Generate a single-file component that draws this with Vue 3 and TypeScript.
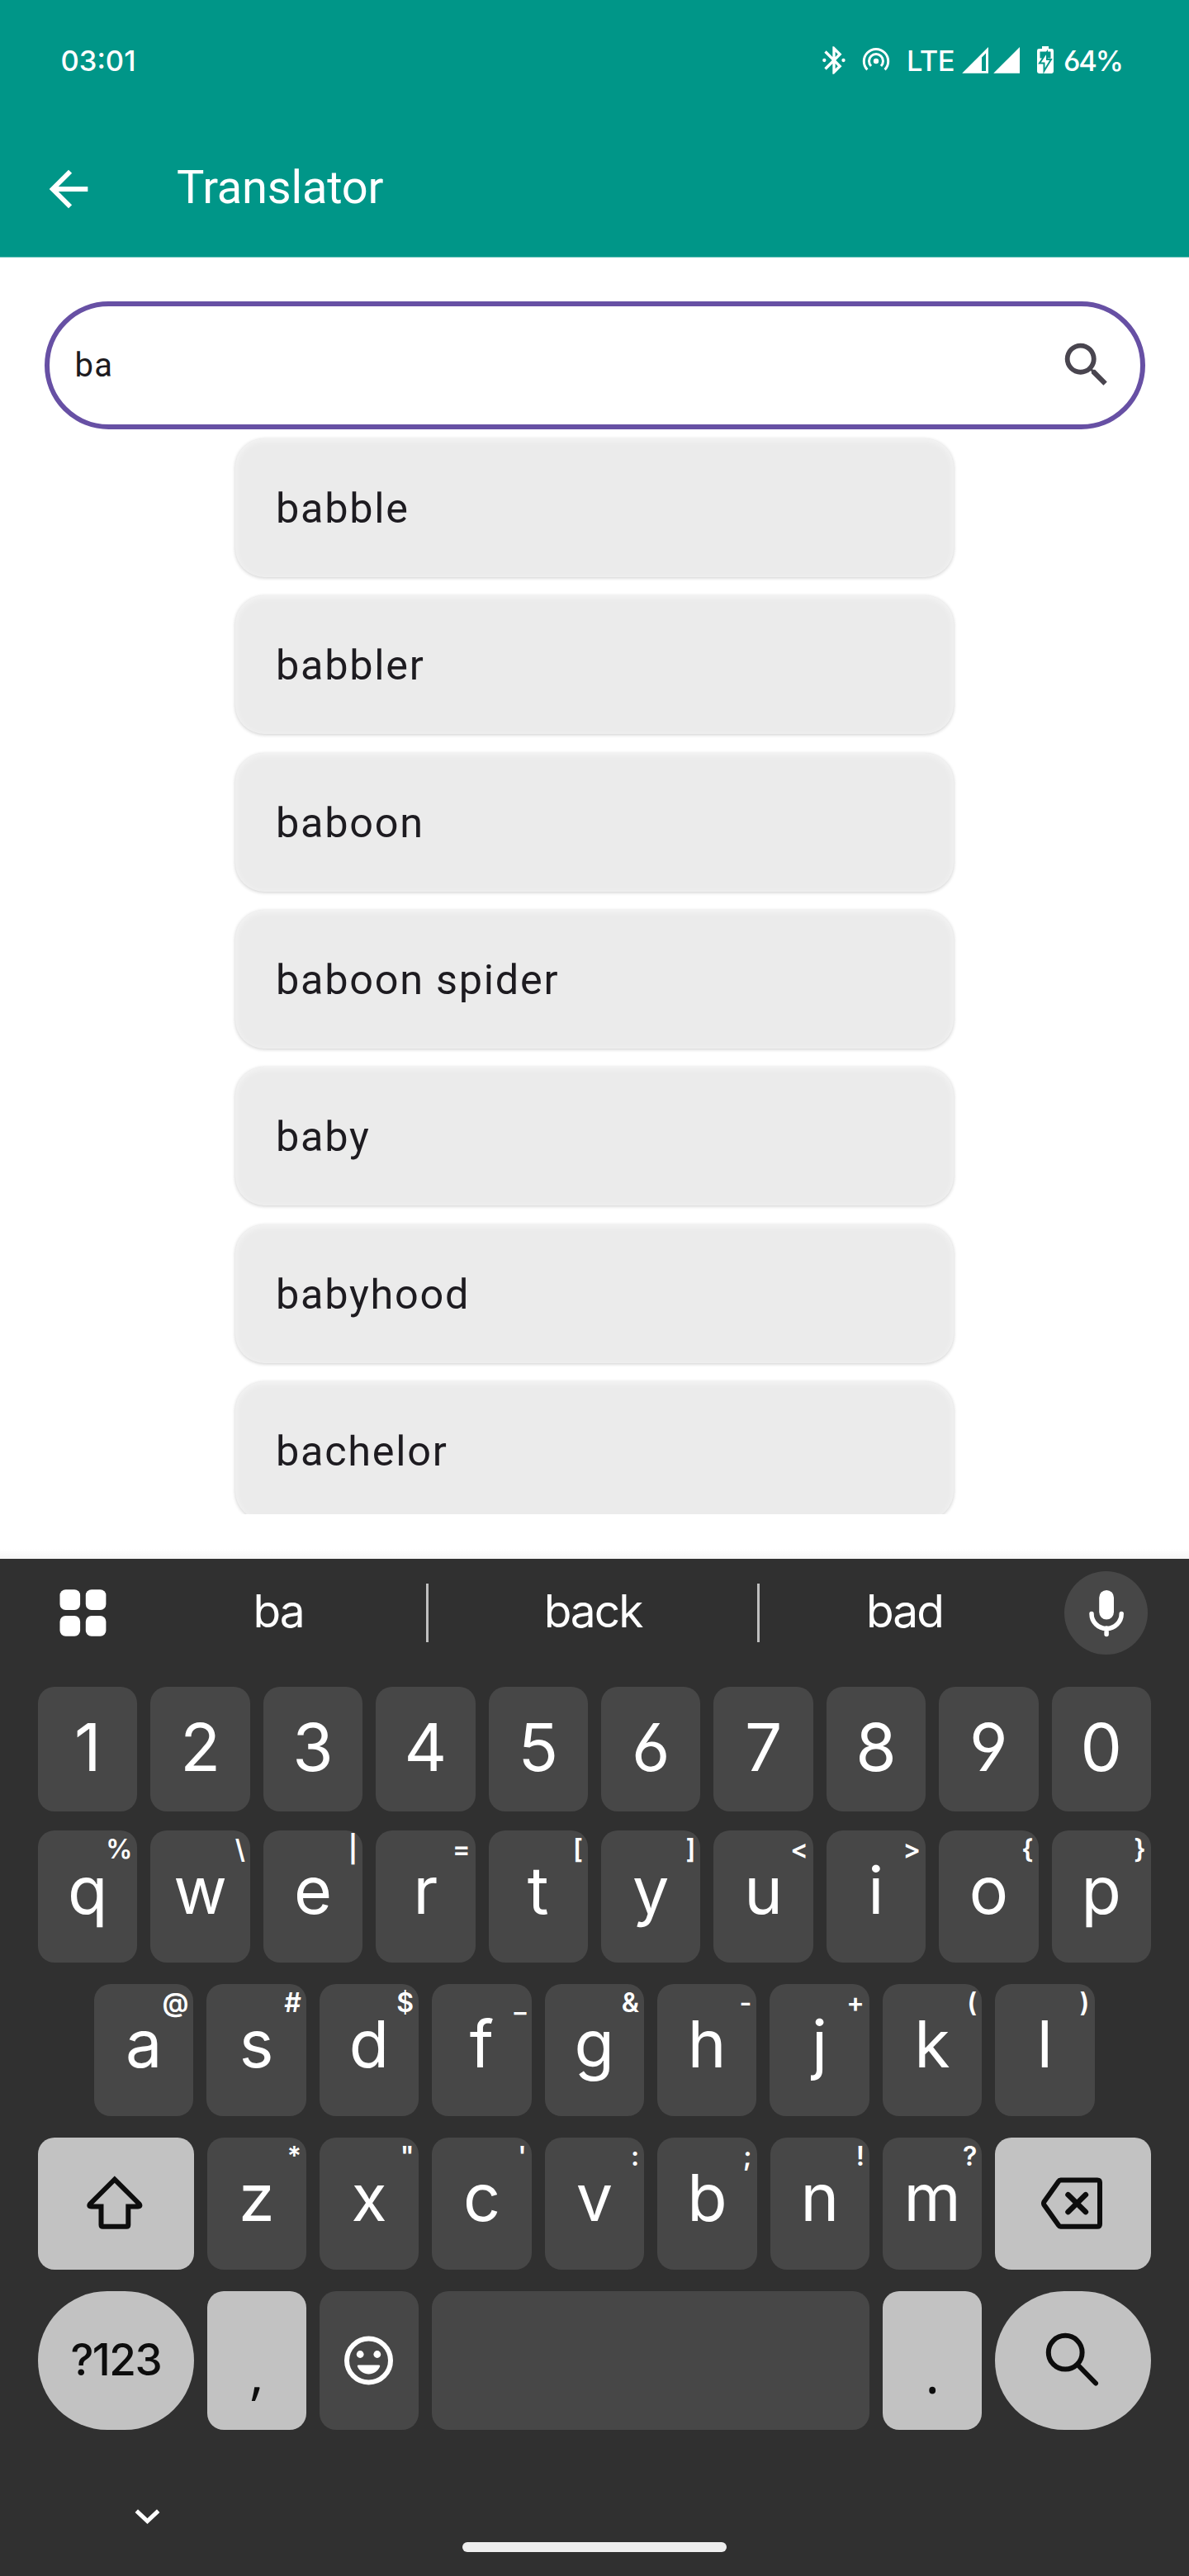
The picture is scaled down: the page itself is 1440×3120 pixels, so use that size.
<script setup lang="ts">
interface Key {
  label: string
  hint?: string
}

const words: string[] = ['babble', 'babbler', 'baboon', 'baboon spider', 'baby', 'babyhood', 'bachelor']
const suggestions: string[] = ['ba', 'back', 'bad']

const toKeys = (labels: string, hints = ''): Key[] =>
  [...labels].map((label, i) => ({ label, hint: hints[i] }))

const digitRow: Key[] = toKeys('1234567890')
const topRow: Key[] = toKeys('qwertyuiop', '%\\|=[]<>{}')
const homeRow: Key[] = toKeys('asdfghjkl', '@#$_&-+()')
const bottomRow: Key[] = toKeys('zxcvbnm', '*"\':;!?')
</script>

<template>
  <div class="screen">
    <header class="header">
      <div class="status">
        <span class="clock">03:01</span>
        <div class="indicators">
          <svg class="bt" width="40" height="40" viewBox="0 0 24 24" fill="#fff">
            <path d="M17.71 7.71 12 2h-1v7.59L6.41 5 5 6.41 10.59 12 5 17.59 6.41 19 11 14.41V22h1l5.71-5.71-4.3-4.29 4.3-4.29zM13 5.83l1.88 1.88L13 9.59V5.83zm1.88 10.46L13 18.17v-3.76l1.88 1.88z" />
            <circle cx="5" cy="12" r="1.3" />
            <circle cx="18.9" cy="12" r="1.3" />
          </svg>
          <svg class="hotspot" width="36" height="36" viewBox="0 0 36 36" fill="none" stroke="#fff" stroke-width="3">
            <circle cx="18" cy="19" r="3.2" fill="#fff" stroke="none" />
            <path d="M12 25a8.5 8.5 0 1 1 12 0" />
            <path d="M7.4 29.4a14.7 14.7 0 1 1 21.2 0" />
          </svg>
          <span class="lte">LTE</span>
          <svg class="signal" width="76" height="36" viewBox="0 0 76 36" fill="#fff">
            <path fill-rule="evenodd" d="M35 2v31.800H3.200zM32 9.500 27 14.500v16.500H32z" />
            <path d="M73 2v31.800H41.200z" />
          </svg>
          <svg class="battery" width="24" height="36" viewBox="0 0 24 36">
            <path fill="#fff" d="M8 1h8v3h3.600Q22 4 22 6.400v25.200Q22 34 19.600 34H4.400Q2 34 2 31.600V6.400Q2 4 4.400 4H8z" />
            <path fill="#009688" d="M5.500 7.500h13v8h-13z" />
            <path fill="#fff" stroke="#009688" stroke-width="2" d="M14 8 5 21.500h5.500V31L19 17h-5z" />
          </svg>
          <span class="percent">64%</span>
        </div>
      </div>
      <div class="appbar">
        <svg width="70" height="70" viewBox="0 0 24 24" fill="#fff">
          <path d="M20 11H7.830l5.590-5.590L12 4l-8 8 8 8 1.410-1.410L7.830 13H20z" />
        </svg>
        <h1 class="title">Translator</h1>
      </div>
    </header>

    <main class="main">
      <div class="search">
        <span class="query">ba</span>
        <svg width="70" height="70" viewBox="0 0 24 24" fill="#49454f">
          <path d="M15.500 14h-.79l-.28-.27A6.471 6.471 0 0 0 16 9.500 6.500 6.500 0 1 0 9.500 16c1.610 0 3.090-.59 4.230-1.570l.27.28v.79l5 4.990L20.490 19zm-6 0C7.010 14 5 11.990 5 9.500S7.010 5 9.500 5 14 7.010 14 9.500 11.990 14 9.500 14z" />
        </svg>
      </div>
      <ul class="results">
        <li v-for="word in words" :key="word" class="card">{{ word }}</li>
      </ul>
    </main>

    <section class="keyboard">
      <div class="strip">
        <svg class="apps" width="57" height="57" viewBox="0 0 57 57" fill="#fff">
          <rect x=".5" y=".3" width="24.600" height="24.800" rx="7" />
          <rect x="31.800" y=".3" width="24.600" height="24.800" rx="7" />
          <rect x=".5" y="32" width="24.600" height="24.800" rx="7" />
          <rect x="31.800" y="32" width="24.600" height="24.800" rx="7" />
        </svg>
        <span v-for="s in suggestions" :key="s" class="suggestion">{{ s }}</span>
        <div class="mic">
          <svg width="44" height="60" viewBox="0 0 44 60">
            <rect x="13.200" y="2" width="17.800" height="35.500" rx="8.900" fill="#fff" />
            <path d="M4 30.500a18.100 18.100 0 0 0 36.200 0M22.100 48v7.500" fill="none" stroke="#fff" stroke-width="5.500" stroke-linecap="round" />
          </svg>
        </div>
      </div>

      <div class="row digits">
        <div v-for="k in digitRow" :key="k.label" class="key">{{ k.label }}</div>
      </div>
      <div class="row">
        <div v-for="k in topRow" :key="k.label" class="key">{{ k.label }}<span class="hint">{{ k.hint }}</span></div>
      </div>
      <div class="row inset">
        <div v-for="k in homeRow" :key="k.label" class="key">{{ k.label }}<span class="hint">{{ k.hint }}</span></div>
      </div>
      <div class="row">
        <div class="key wide light icon">
          <svg width="80" height="80" viewBox="0 0 80 80" fill="none" stroke="#0d0d0d" stroke-width="6">
            <path d="m38.800 10.700 29.400 29.300q3 3.600-1.500 3.600H55.300v22.200q0 2-2 2H24.500q-2 0-2-2V43.600H11q-4.500 0-1.500-3.600z" />
          </svg>
        </div>
        <div v-for="k in bottomRow" :key="k.label" class="key">{{ k.label }}<span class="hint">{{ k.hint }}</span></div>
        <div class="key wide light icon">
          <svg width="80" height="80" viewBox="0 0 80 80" fill="none" stroke="#0d0d0d" stroke-width="6" stroke-linejoin="round" stroke-linecap="round">
            <path d="M24.500 11.500H69q3 0 3 3v50.200q0 3-3 3H24.500q-1.500 0-2.400-1.500L4.500 41.500q-1-1.900 0-3.800L22.100 13q.9-1.500 2.400-1.500z" />
            <path d="m33.500 29.200 21.400 20.900M54.900 29.200 33.500 50.100" stroke-width="6.500" />
          </svg>
        </div>
      </div>
      <div class="row last">
        <div class="key wide light pill symbols">?123</div>
        <div class="key light punct">,</div>
        <div class="key icon">
          <svg width="60" height="60" viewBox="0 0 60 60">
            <circle cx="29.500" cy="30" r="26.500" fill="none" stroke="#fff" stroke-width="6" />
            <circle cx="19.200" cy="22.500" r="4.400" fill="#fff" />
            <circle cx="39.800" cy="22.500" r="4.400" fill="#fff" />
            <path d="M17 35.500h25q1.800 0 1 2C40.500 43 35.500 46.500 29.500 46.500S18.500 43 16 37.500q-.8-2 1-2z" fill="#fff" />
          </svg>
        </div>
        <div class="key space"></div>
        <div class="key light punct">.</div>
        <div class="key wide light pill icon">
          <svg width="80" height="80" viewBox="0 0 80 80" fill="none" stroke="#0d0d0d" stroke-width="6" stroke-linecap="round">
            <circle cx="30.200" cy="30.200" r="20.400" />
            <path d="m45 45 22 22.500" />
          </svg>
        </div>
      </div>

      <div class="nav">
        <svg class="chevron" width="32" height="20" viewBox="0 0 32 20" fill="none" stroke="#fff" stroke-width="5">
          <path d="m2.300 3.200 13.200 12.300L28.700 3.200" />
        </svg>
        <div class="home"></div>
      </div>
    </section>
  </div>
</template>

<style>
body {
  margin: 0;
  background: #fff;
}
</style>

<style scoped>
.screen {
  width: 1440px;
  height: 3120px;
  overflow: hidden;
  display: flex;
  flex-direction: column;
  background: #fff;
  font-family: Roboto, sans-serif;
  color: #1d1b20;
}
svg {
  display: block;
  flex: none;
}
.header {
  height: 311px;
  flex: none;
  background: #009688;
  border-bottom: 1px solid #73c5be;
  color: #fff;
}
.status {
  height: 146px;
  display: flex;
  align-items: center;
  justify-content: space-between;
  padding: 0 72px 0 73.500px;
  font: 500 34.500px Inter, sans-serif;
  font-feature-settings: "cv03", "cv04";
}
.indicators {
  display: flex;
  align-items: center;
}
.bt {
  margin-right: 13px;
}
.hotspot {
  margin-right: 19px;
}
.lte {
  width: 64px;
  letter-spacing: -0.500px;
}
.signal {
  margin-right: 16px;
}
.battery {
  margin-right: 10px;
}
.percent {
  width: 80px;
  letter-spacing: -2.200px;
}
.appbar {
  height: 165px;
  display: flex;
  align-items: center;
  padding-left: 48px;
}
.title {
  margin: 0 0 3px 96px;
  font-size: 56px;
  font-weight: 400;
  line-height: 66px;
  letter-spacing: -0.200px;
}
.main {
  height: 1576px;
  flex: none;
  box-sizing: border-box;
  padding-top: 53px;
  background: linear-gradient(#fff, #fff 1564px, #f5f5f5 1576px);
}
.search {
  box-sizing: border-box;
  height: 155px;
  margin: 0 53.500px;
  border: 6px solid #6750a4;
  border-radius: 78px;
  display: flex;
  align-items: center;
  justify-content: space-between;
  padding: 0 30px 2px 31px;
}
.query {
  padding-top: 2px;
  font-size: 40px;
  letter-spacing: 1.400px;
}
.results {
  list-style: none;
  margin: 0;
  padding: 11px 0 0;
  box-sizing: border-box;
  height: 1314px;
  overflow: hidden;
  display: flex;
  flex-direction: column;
  align-items: center;
  gap: 22.350px;
}
.card {
  box-sizing: border-box;
  width: 870px;
  height: 168px;
  flex: none;
  padding-left: 49px;
  border-radius: 35px;
  background: #ebebeb;
  box-shadow: 0 1px 4px rgba(0, 0, 0, 0.2), inset 0 2px 8px rgba(255, 255, 255, 0.55);
  font-size: 50.400px;
  line-height: 169px;
  letter-spacing: 1.750px;
}
.keyboard {
  flex: 1;
  background: #303030;
  color: #fff;
  font-family: Inter, sans-serif;
}
.strip {
  height: 131px;
  margin-bottom: 24px;
  display: flex;
  align-items: center;
  padding-left: 72px;
}
.apps {
  margin-right: 29px;
}
.suggestion {
  box-sizing: border-box;
  width: 358px;
  height: 71px;
  text-align: center;
  font-size: 55px;
  line-height: 66px;
  letter-spacing: -2px;
}
.suggestion + .suggestion {
  width: 401px;
  border-left: 3px solid #bfbfbf;
}
.suggestion + .suggestion + .suggestion {
  width: 354px;
}
.mic {
  width: 101px;
  height: 101px;
  margin-left: 18px;
  border-radius: 50%;
  background: #474747;
  display: flex;
  align-items: center;
  justify-content: center;
}
.row {
  height: 160px;
  margin: 0 46px 26px;
  display: flex;
  gap: 16px;
}
.row.digits {
  height: 151px;
  margin-bottom: 23px;
}
.row.inset {
  margin: 0 114px 26px;
}
.row.last {
  height: 168px;
  margin-bottom: 0;
}
.key {
  position: relative;
  flex: none;
  width: 120.400px;
  border-radius: 20px;
  background: #474747;
  text-align: center;
  font-size: 79px;
  line-height: 145px;
}
.digits .key {
  line-height: 146px;
  font-size: 80px;
  font-feature-settings: "cv03", "cv04";
}
.hint {
  position: absolute;
  top: 2px;
  right: 6px;
  font-size: 32px;
  font-weight: 600;
  line-height: 42px;
}
.key.wide {
  width: 188.600px;
}
.key.light {
  background: #c2c2c2;
  color: #0d0d0d;
}
.key.pill {
  border-radius: 84px;
}
.key.icon {
  display: flex;
  align-items: center;
  justify-content: center;
}
.key.symbols {
  font-size: 53px;
  font-weight: 500;
  line-height: 166px;
  letter-spacing: -1.500px;
}
.key.punct {
  font-family: "Open Sans", sans-serif;
  font-size: 68px;
  line-height: 195px;
}
.key.space {
  flex: 1;
}
.nav {
  display: flex;
  flex-direction: column;
}
.chevron {
  margin: 95px 0 21px 163px;
}
.home {
  align-self: center;
  width: 320px;
  height: 12px;
  border-radius: 6px;
  background: #eee;
}
</style>
